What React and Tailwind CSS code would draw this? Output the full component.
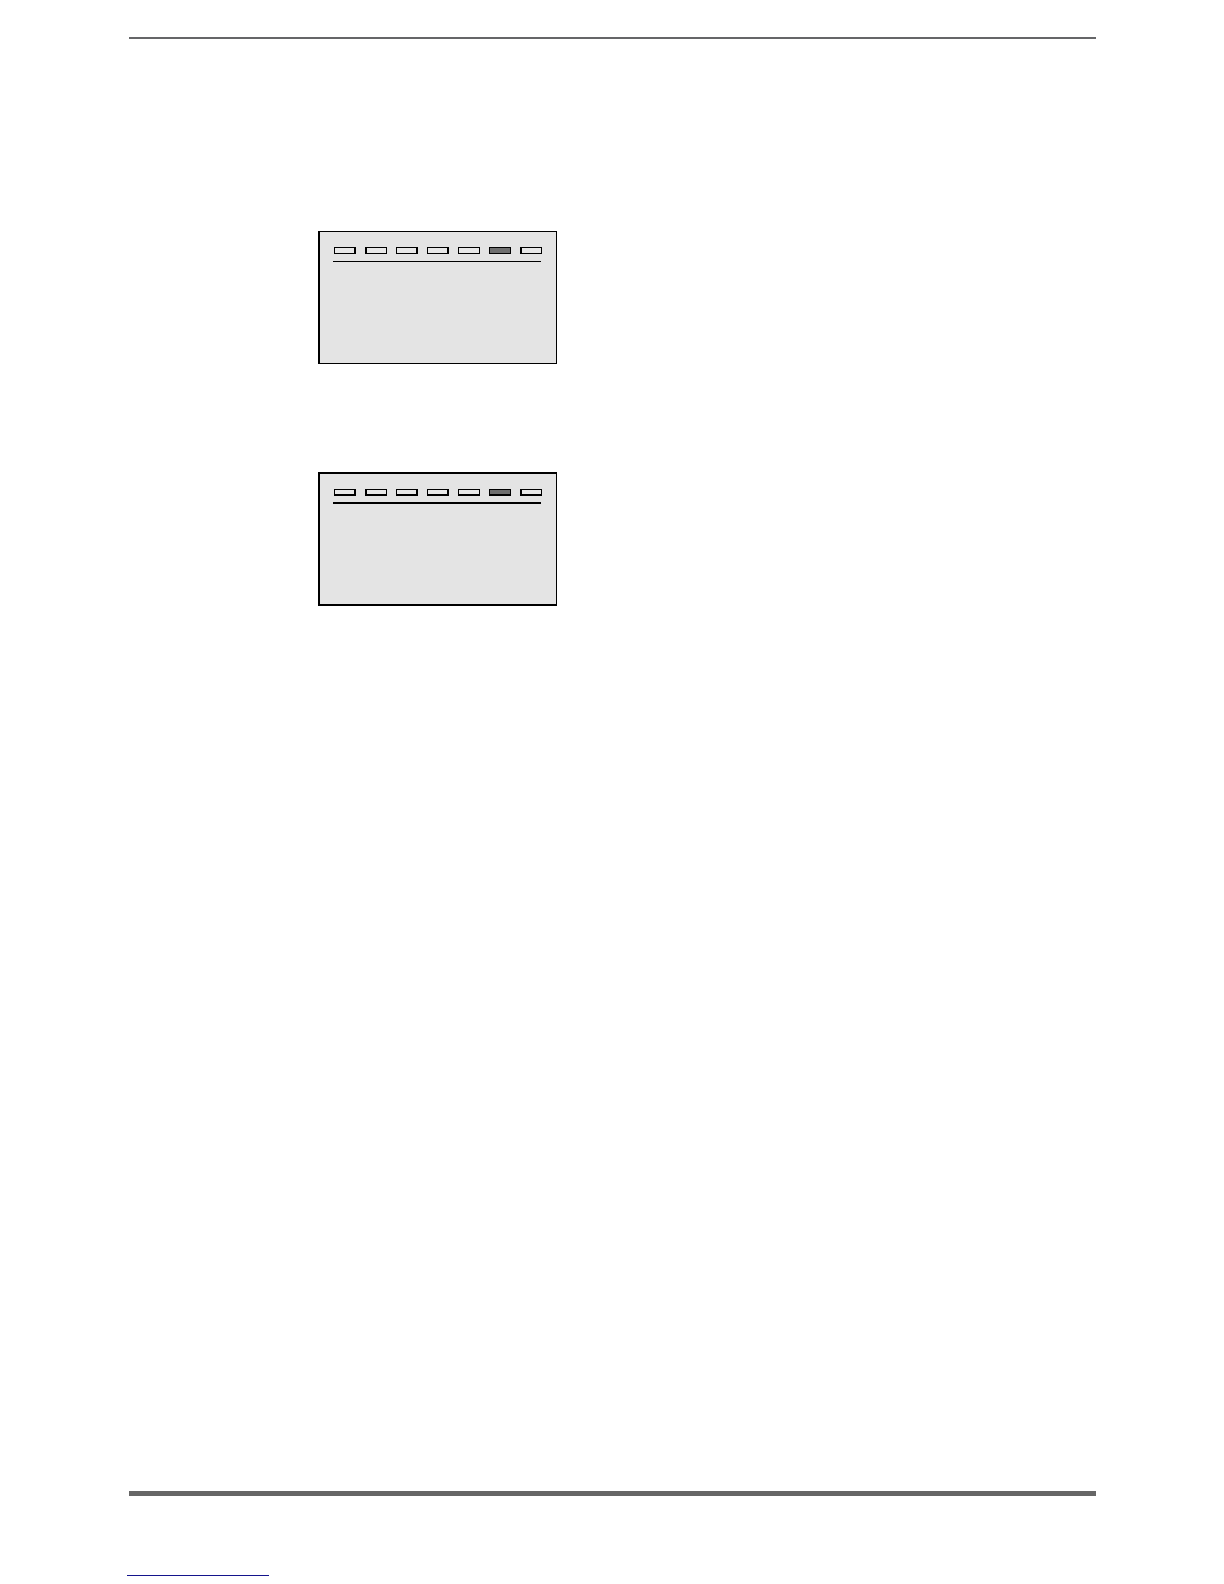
const TABS = [
  { id: 1, edge: "border-r-2" },
  { id: 2, edge: "border-l-2" },
  { id: 3, edge: "border-r-2" },
  { id: 4, edge: "border-r-2" },
  { id: 5, edge: "" },
  { id: 6, edge: "", active: true },
  { id: 7, edge: "border-l-2" }
];

function Screen({ heavy = false }) {
  return (
    <section
      className={`w-[239px] border border-l-2 border-black bg-[#e4e4e4] px-[14px] pt-[15px] ${
        heavy ? "h-[134px] border-y-2" : "h-[133px]"
      }`}
    >
      <div className="flex justify-between">
        {TABS.map((tab) => (
          <span
            key={tab.id}
            className={`h-[7px] w-[22px] border border-black ${tab.edge} ${heavy ? "border-b-2" : ""} ${
              tab.active ? "bg-[#6e6e6e]" : "bg-[#e8e8e8]"
            }`}
          />
        ))}
      </div>
      <hr className={`-ml-px mr-px border-black ${heavy ? "mt-[6px] border-t-2" : "mt-[7px] border-t"}`} />
    </section>
  );
}

function App() {
  return (
    <div className="flex min-h-screen flex-col bg-white pb-2 pl-[129px] pr-32 pt-[37px]">
      <header>
        <hr className="border-t-2 border-[#656668]" />
      </header>

      <main className="flex flex-col gap-[108px] pl-[189px] pt-48">
        <Screen />
        <Screen heavy />
      </main>

      <footer className="mt-auto">
        <hr className="border-t-[5px] border-[#666666]" />
        <div className="-ml-0.5 mt-[79px] h-px w-[142px] bg-[#14148c]" />
      </footer>
    </div>
  );
}

export default App;
